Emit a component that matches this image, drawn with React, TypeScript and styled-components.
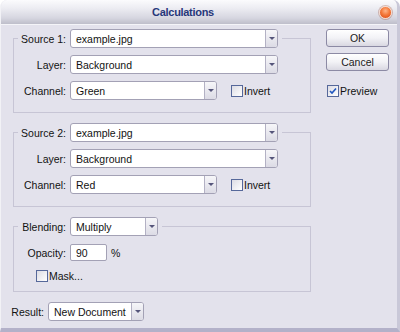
import React from 'react';
import styled, { createGlobalStyle } from 'styled-components';

const Global = createGlobalStyle`
  html, body { margin: 0; padding: 0; background: #ffffff; }
  body {
    font-family: "Liberation Sans", Arial, sans-serif;
    font-size: 10.5px;
    color: #121212;
  }
  #root { width: 400px; height: 332px; }
`;

const Window = styled.div`
  width: 400px;
  height: 332px;
  box-sizing: border-box;
  display: flex;
  flex-direction: column;
  background: #e3e2ec;
  border-radius: 7px 7px 0 0;
  border-left: 1px solid #f2f2f6;
  border-right: 3px solid #c9c8d8;
  border-bottom: 4px solid #b3b1c9;
  overflow: hidden;
`;

const TitleBar = styled.div`
  height: 24px;
  flex: none;
  display: flex;
  align-items: center;
  padding: 0 5px 0 0;
  background: linear-gradient(#fbfbfd 0%, #ececf2 35%, #d6d6e0 75%, #bebeca 100%);
  border-bottom: 1px solid #f4f4f8;
`;

const Title = styled.div`
  flex: 1;
  text-align: center;
  padding-left: 4px;
  padding-right: 18px;
  font-weight: bold;
  font-size: 11px;
  letter-spacing: -0.3px;
  color: #27387a;
`;

const CloseButton = styled.div`
  width: 13px;
  height: 13px;
  border-radius: 50%;
  box-sizing: border-box;
  border: 1px solid #f6d6c6;
  background: radial-gradient(circle at 50% 35%, #ffb58a 0%, #f47a3c 45%, #d94410 100%);
  box-shadow: 0 0 0 1px rgba(160, 90, 70, 0.35);
`;

const Body = styled.div`
  flex: 1;
  display: flex;
  gap: 15px;
  padding: 4px 0 0 10px;
`;

const LeftCol = styled.div`
  width: 300px;
  display: flex;
  flex-direction: column;
`;

const RightCol = styled.div`
  display: flex;
  flex-direction: column;
  align-items: flex-start;
`;

const Group = styled.fieldset<{ $first?: boolean; $pb: number }>`
  margin: ${(p) => (p.$first ? '0' : '10px')} 0 0 2px;
  padding: 0 0 ${(p) => p.$pb}px 0;
  width: 298px;
  box-sizing: border-box;
  min-width: 0;
  border: 1px solid #c7c5d5;
`;

const Legend = styled.legend`
  padding: 0 4px 0 3px;
  margin-left: 4px;
`;

const Rows = styled.div<{ $pt: number }>`
  display: flex;
  flex-direction: column;
  gap: 7px;
  padding-top: ${(p) => p.$pt}px;
  padding-left: 7px;
`;

const Row = styled.div`
  display: flex;
  align-items: center;
  height: 19px;
`;

const Label = styled.span<{ $w?: number }>`
  width: ${(p) => p.$w ?? 45}px;
  flex: none;
  text-align: right;
  margin-right: 4px;
  white-space: nowrap;
`;

const SelectBox = styled.div<{ $w: number }>`
  width: ${(p) => p.$w}px;
  height: 19px;
  box-sizing: border-box;
  display: flex;
  align-items: stretch;
  background: #ffffff;
  border: 1px solid #a3a1b5;
  border-radius: 3px;
  overflow: hidden;
`;

const SelectText = styled.span`
  flex: 1;
  display: flex;
  align-items: center;
  padding-left: 5px;
  white-space: nowrap;
`;

const ArrowPart = styled.span`
  width: 11px;
  flex: none;
  border-left: 1px solid #b3b1c4;
  background: linear-gradient(#f6f6f9, #dcdbe5);
  display: flex;
  align-items: center;
  justify-content: center;
  &::after {
    content: '';
    border-left: 3px solid transparent;
    border-right: 3px solid transparent;
    border-top: 3px solid #55557a;
  }
`;

const TextInput = styled.div`
  width: 37px;
  height: 17px;
  box-sizing: border-box;
  border: 1px solid #a3a1b5;
  border-radius: 2px;
  background: #fff;
  padding-left: 5px;
  display: flex;
  align-items: center;
`;

const Unit = styled.span`
  margin-left: 4px;
`;

const CheckLabel = styled.label<{ $ml?: number; $mt?: number }>`
  display: flex;
  align-items: center;
  margin-left: ${(p) => p.$ml ?? 0}px;
  margin-top: ${(p) => p.$mt ?? 0}px;
  gap: 1px;
`;

const Box = styled.span`
  width: 12px;
  height: 12px;
  box-sizing: border-box;
  border: 1px solid #56689a;
  background: linear-gradient(135deg, #dcdce4, #ffffff);
  display: flex;
  align-items: center;
  justify-content: center;
`;

const MaskRow = styled.div`
  display: flex;
  align-items: center;
  height: 13px;
  padding-left: 15px;
`;

const ResultRow = styled.div`
  display: flex;
  align-items: center;
  margin-top: 10px;
`;

const Button = styled.div<{ $mt?: number }>`
  width: 63px;
  height: 18px;
  box-sizing: border-box;
  margin-top: ${(p) => p.$mt ?? 0}px;
  border: 1px solid #8c8aa4;
  border-radius: 3px;
  background: linear-gradient(#ffffff 0%, #f2f2f6 50%, #d9d8e2 100%);
  display: flex;
  align-items: center;
  justify-content: center;
  color: #1a1a1a;
`;

const Check = () => (
  <svg width="8" height="8" viewBox="0 0 8 8">
    <path d="M1 4 L3 6 L7 1.5" fill="none" stroke="#2157c0" strokeWidth="1.6" />
  </svg>
);

const Select = ({ w, value }: { w: number; value: string }) => (
  <SelectBox $w={w}>
    <SelectText>{value}</SelectText>
    <ArrowPart />
  </SelectBox>
);

const CheckBox = ({
  checked,
  text,
  ml,
  mt,
}: {
  checked?: boolean;
  text: string;
  ml?: number;
  mt?: number;
}) => (
  <CheckLabel $ml={ml} $mt={mt}>
    <Box>{checked ? <Check /> : null}</Box>
    <span>{text}</span>
  </CheckLabel>
);

const SourceGroup = ({ n, channel, first }: { n: number; channel: string; first?: boolean }) => (
  <Group $first={first} $pb={12}>
    <Legend>
      <Row>
        <Label>Source {n}:</Label>
        <Select w={208} value="example.jpg" />
      </Row>
    </Legend>
    <Rows $pt={7}>
      <Row>
        <Label>Layer:</Label>
        <Select w={208} value="Background" />
      </Row>
      <Row>
        <Label>Channel:</Label>
        <Select w={147} value={channel} />
        <CheckBox text="Invert" ml={14} />
      </Row>
    </Rows>
  </Group>
);

export default function App() {
  return (
    <>
      <Global />
      <Window>
        <TitleBar>
          <Title>Calculations</Title>
          <CloseButton />
        </TitleBar>
        <Body>
          <LeftCol>
            <SourceGroup n={1} channel="Green" first />
            <SourceGroup n={2} channel="Red" />
            <Group $pb={9}>
              <Legend>
                <Row>
                  <Label>Blending:</Label>
                  <Select w={88} value="Multiply" />
                </Row>
              </Legend>
              <Rows $pt={7}>
                <Row>
                  <Label>Opacity:</Label>
                  <TextInput>90</TextInput>
                  <Unit>%</Unit>
                </Row>
                <MaskRow>
                  <CheckBox text="Mask..." />
                </MaskRow>
              </Rows>
            </Group>
            <ResultRow>
              <Label $w={33}>Result:</Label>
              <Select w={96} value="New Document" />
            </ResultRow>
          </LeftCol>
          <RightCol>
            <Button>OK</Button>
            <Button $mt={6}>Cancel</Button>
            <CheckBox checked text="Preview" ml={1} mt={14} />
          </RightCol>
        </Body>
      </Window>
    </>
  );
}
